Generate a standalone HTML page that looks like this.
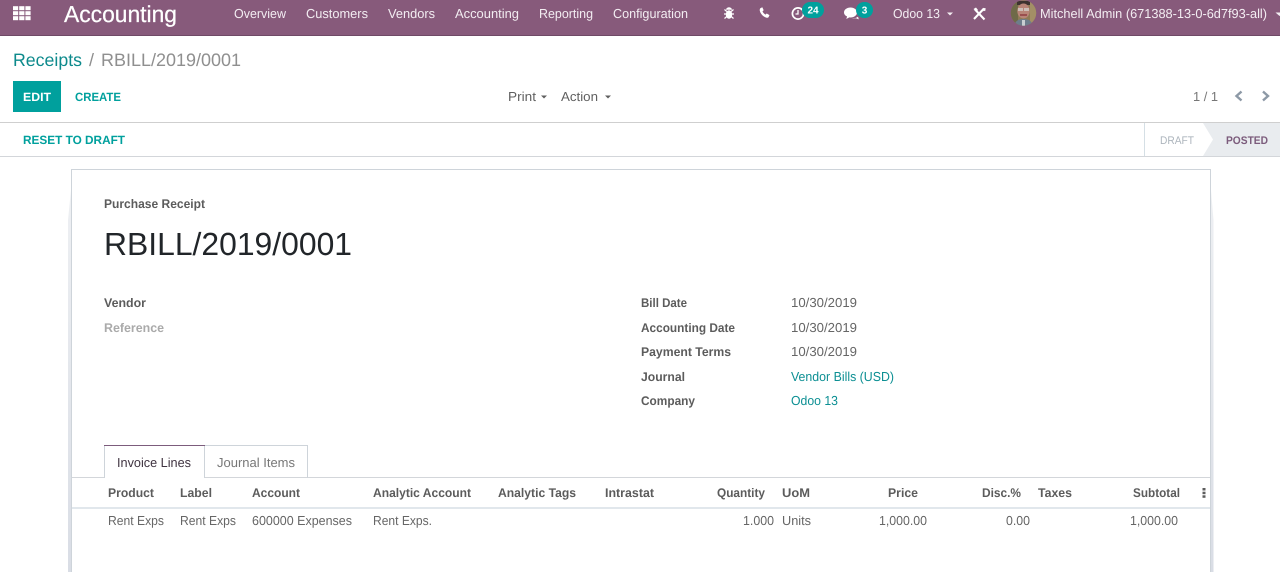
<!DOCTYPE html>
<html lang="en"><head><meta charset="utf-8"><title>Receipts</title>
<style>
html,body{margin:0;padding:0;background:#fff;width:1280px;height:572px;overflow:hidden}
svg{display:block}
text{font-family:"Liberation Sans",Arial,sans-serif;font-size:13px;fill:#666}
.n{fill:#f3edf2}
.b{font-weight:700;fill:#5c5c5c;font-size:12.5px}
.r{fill:#666}
.t{fill:#00a09d}
.u{font-weight:700;font-size:12px;fill:#00a09d}
.w{fill:#fff}
</style></head><body>
<svg width="1280" height="572" viewBox="0 0 1280 572" xmlns="http://www.w3.org/2000/svg" text-rendering="geometricPrecision">
<defs><linearGradient id="sl" x1="0" y1="0" x2="0" y2="1"><stop offset="0" stop-color="#eef0f3"/><stop offset="1" stop-color="#d9dde5"/></linearGradient>
<clipPath id="av"><circle cx="1023.5" cy="13" r="12.7"/></clipPath></defs>
<rect width="1280" height="572" fill="#fff"/>
<!-- navbar -->
<rect width="1280" height="36" fill="#875a7b"/><rect y="35" width="1280" height="1" fill="#6f4a66"/>
<g fill="#fff"><rect x="13" y="6.2" width="5.2" height="4"/><rect x="19.2" y="6.2" width="5.200" height="4"/><rect x="25.400" y="6.200" width="5.200" height="4"/><rect x="13" y="11.200" width="5.200" height="4"/><rect x="19.200" y="11.200" width="5.200" height="4"/><rect x="25.400" y="11.200" width="5.200" height="4"/><rect x="13" y="16.200" width="5.200" height="4"/><rect x="19.200" y="16.200" width="5.200" height="4"/><rect x="25.400" y="16.200" width="5.200" height="4"/></g>
<text class="w" x="64" y="22" textLength="113" lengthAdjust="spacingAndGlyphs" stroke="#fff" stroke-width=".25" style="font-size:23px">Accounting</text>
<text class="n" x="234" y="18" textLength="52" lengthAdjust="spacingAndGlyphs">Overview</text>
<text class="n" x="306" y="18" textLength="62" lengthAdjust="spacingAndGlyphs">Customers</text>
<text class="n" x="388" y="18" textLength="47" lengthAdjust="spacingAndGlyphs">Vendors</text>
<text class="n" x="455" y="18" textLength="64" lengthAdjust="spacingAndGlyphs">Accounting</text>
<text class="n" x="539" y="18" textLength="54" lengthAdjust="spacingAndGlyphs">Reporting</text>
<text class="n" x="613" y="18" textLength="75" lengthAdjust="spacingAndGlyphs">Configuration</text>
<!-- bug -->
<g fill="#fff" stroke="none"><ellipse cx="729" cy="14.5" rx="3.2" ry="4.3"/><path d="M726 9.8a3 2.6 0 0 1 6 0z"/></g>
<path d="M724.5 9.5l2.3 2M733.5 9.5l-2.3 2M724 14h2.5M734 14h-2.5M724.5 18.5l2.3-2M733.5 18.5l-2.3-2" stroke="#fff" stroke-width="1.2" fill="none"/>
<!-- phone -->
<path d="M760.3 8.2l2-.9 1.4 3-1.2 1c.5 1.4 1.5 2.5 3 3.3l1.2-1.1 2.8 1.6-1 2.1c-.5.6-1.4.7-2.3.4-3.2-1.1-5.6-3.6-6.4-6.8-.2-1.1 0-2 .5-2.6z" fill="#fff"/>
<!-- clock -->
<circle cx="798" cy="13.5" r="5.6" fill="none" stroke="#fff" stroke-width="1.7"/><path d="M798 10v4h-2.5" fill="none" stroke="#fff" stroke-width="1.3"/>
<rect x="802" y="2" width="22" height="16" rx="8" fill="#00a09d"/>
<text x="813" y="13.5" text-anchor="middle" style="font-size:10px;font-weight:700;fill:#fff">24</text>
<!-- comments -->
<path d="M844 12.500c0-2.800 2.800-5 6.500-5s6.500 2.200 6.500 5-2.800 5-6.500 5l-1.200-.1-3 1.600.8-2.500C845 15.500 844 14.200 844 12.500z" fill="#fff"/>
<path d="M852 18.200c2.500.2 4.500-.3 6-1.500l.8 2.700-2.800-1.100c-1.300.3-2.700.3-4-.1z" fill="#fff"/>
<rect x="856" y="2" width="17" height="16" rx="8" fill="#00a09d"/>
<text x="864.500" y="13.500" text-anchor="middle" style="font-size:10px;font-weight:700;fill:#fff">3</text>
<text class="n" x="893" y="18" textLength="47" lengthAdjust="spacingAndGlyphs">Odoo 13</text>
<path d="M947 12.500h6l-3 3z" fill="#f3edf2"/>
<!-- tools -->
<path d="M975 9.500l9.500 10M984 8.500l-10 10.500" stroke="#fff" stroke-width="2.100" fill="none"/><path d="M973.500 9l2.500-1.500 2 2.500-1.800 1.800zM985.500 8l-2.800.3 1 3 1.800-.8z" fill="#fff"/>
<!-- avatar -->
<g clip-path="url(#av)"><rect x="1010" y="0" width="27" height="27" fill="#8f7b55"/><rect x="1010" y="0" width="8" height="27" fill="#6f6a48"/><rect x="1030" y="0" width="7" height="27" fill="#a38f66"/><rect x="1017" y="1" width="13" height="4" fill="#3d3330"/><ellipse cx="1023.500" cy="11" rx="6.200" ry="7.500" fill="#b98578"/><rect x="1018" y="8" width="5" height="3" fill="#cdbfb8"/><rect x="1024" y="8" width="5" height="3" fill="#cdbfb8"/><rect x="1020" y="14" width="7" height="2" fill="#9a4f4f"/><path d="M1014 27c1-6 4-8 9.500-8s8.500 2 9.500 8z" fill="#6e7d8c"/><rect x="1022" y="20" width="3" height="6" fill="#c9ced2"/></g>
<text class="n" x="1040" y="18" textLength="227" lengthAdjust="spacingAndGlyphs">Mitchell Admin (671388-13-0-6d7f93-all)</text>
<path d="M1275.500 12.500h8l-4 3.500z" fill="#f3edf2"/>
<!-- breadcrumb -->
<text x="13" y="66" textLength="69" lengthAdjust="spacingAndGlyphs" style="font-size:18px;fill:#0d8a8c">Receipts</text>
<text x="89" y="66" style="font-size:18px;fill:#8f8f8f">/</text>
<text x="101" y="66" textLength="140" lengthAdjust="spacingAndGlyphs" style="font-size:18px;fill:#8f8f8f">RBILL/2019/0001</text>
<rect x="13" y="81" width="48" height="31" fill="#00a09d"/>
<text class="u" x="23" y="101" textLength="28" lengthAdjust="spacingAndGlyphs" style="fill:#fff">EDIT</text>
<text class="u" x="75" y="101" textLength="46" lengthAdjust="spacingAndGlyphs">CREATE</text>
<text x="508" y="101" textLength="28" lengthAdjust="spacingAndGlyphs" style="fill:#5f5f5f">Print</text><path d="M541 95.500h6l-3 3z" fill="#5f5f5f"/>
<text x="561" y="101" textLength="37" lengthAdjust="spacingAndGlyphs" style="fill:#5f5f5f">Action</text><path d="M605 95.500h6l-3 3z" fill="#5f5f5f"/>
<text x="1193" y="101" textLength="25" lengthAdjust="spacingAndGlyphs" style="fill:#777">1 / 1</text>
<path d="M1241.500 91.500l-5 4.500 5 4.500M1263 91.500l5 4.500-5 4.500" fill="none" stroke="#8d99a6" stroke-width="2.400"/>
<!-- statusbar -->
<rect y="122" width="1280" height="1" fill="#cfcfcf"/><rect y="156" width="1280" height="1" fill="#d3d6da"/>
<text class="u" x="23" y="144" textLength="102" lengthAdjust="spacingAndGlyphs">RESET TO DRAFT</text>
<rect x="1144" y="123" width="1" height="33" fill="#d5dfe5"/>
<path d="M1203 123H1280V156H1203L1213 139.500z" fill="#e9ecef"/>
<text x="1160" y="144" textLength="34" lengthAdjust="spacingAndGlyphs" style="font-size:11px;fill:#adb5bd">DRAFT</text>
<text x="1226" y="144" textLength="42" lengthAdjust="spacingAndGlyphs" style="font-size:11px;font-weight:700;fill:#7c5c7c">POSTED</text>
<!-- sheet -->
<path d="M71 190V572H68V220z" fill="url(#sl)"/><path d="M1211 190V572H1213.500V220z" fill="url(#sl)"/>
<path d="M71.500 572V169.500H1210.500V572" fill="none" stroke="#ced4da" stroke-width="1"/>
<text class="b" x="104" y="208" textLength="101" lengthAdjust="spacingAndGlyphs">Purchase Receipt</text>
<text x="104" y="255" textLength="248" lengthAdjust="spacingAndGlyphs" style="font-size:32px;fill:#212529">RBILL/2019/0001</text>
<text class="b" x="104" y="307" textLength="42" lengthAdjust="spacingAndGlyphs">Vendor</text>
<text class="b" x="104" y="332" textLength="60" lengthAdjust="spacingAndGlyphs" style="fill:#aaa">Reference</text>
<text class="b" x="641" y="307" textLength="46" lengthAdjust="spacingAndGlyphs">Bill Date</text>
<text class="b" x="641" y="332" textLength="94" lengthAdjust="spacingAndGlyphs">Accounting Date</text>
<text class="b" x="641" y="356" textLength="90" lengthAdjust="spacingAndGlyphs">Payment Terms</text>
<text class="b" x="641" y="381" textLength="44" lengthAdjust="spacingAndGlyphs">Journal</text>
<text class="b" x="641" y="405" textLength="54" lengthAdjust="spacingAndGlyphs">Company</text>
<text class="r" x="791" y="307" textLength="66" lengthAdjust="spacingAndGlyphs">10/30/2019</text>
<text class="r" x="791" y="332" textLength="66" lengthAdjust="spacingAndGlyphs">10/30/2019</text>
<text class="r" x="791" y="356" textLength="66" lengthAdjust="spacingAndGlyphs">10/30/2019</text>
<text class="t" x="791" y="381" textLength="103" lengthAdjust="spacingAndGlyphs" style="fill:#0c8f93">Vendor Bills (USD)</text>
<text class="t" x="791" y="405" textLength="47" lengthAdjust="spacingAndGlyphs" style="fill:#0c8f93">Odoo 13</text>
<!-- tabs -->
<rect x="72" y="477" width="1138" height="1" fill="#d3d6da"/>
<path d="M204.500 478V445.500H307.500V478" fill="none" stroke="#ced4da"/>
<rect x="105" y="446" width="99" height="33" fill="#fff"/>
<path d="M104.500 478V445.500H204.500V478" fill="none" stroke="#ced4da"/>
<rect x="104" y="445" width="101" height="1" fill="#7c5c7c"/>
<text x="117" y="467" textLength="74" lengthAdjust="spacingAndGlyphs" style="fill:#3f3340">Invoice Lines</text>
<text x="217" y="467" textLength="78" lengthAdjust="spacingAndGlyphs" style="fill:#777">Journal Items</text>
<!-- table -->
<rect x="72" y="507" width="1138" height="2" fill="#e1e7ec"/>
<text class="b" x="108" y="497" textLength="46" lengthAdjust="spacingAndGlyphs">Product</text>
<text class="b" x="180" y="497" textLength="32" lengthAdjust="spacingAndGlyphs">Label</text>
<text class="b" x="252" y="497" textLength="48" lengthAdjust="spacingAndGlyphs">Account</text>
<text class="b" x="373" y="497" textLength="98" lengthAdjust="spacingAndGlyphs">Analytic Account</text>
<text class="b" x="498" y="497" textLength="78" lengthAdjust="spacingAndGlyphs">Analytic Tags</text>
<text class="b" x="605" y="497" textLength="49" lengthAdjust="spacingAndGlyphs">Intrastat</text>
<text class="b" x="717" y="497" textLength="48" lengthAdjust="spacingAndGlyphs">Quantity</text>
<text class="b" x="782" y="497" textLength="28" lengthAdjust="spacingAndGlyphs">UoM</text>
<text class="b" x="888" y="497" textLength="30" lengthAdjust="spacingAndGlyphs">Price</text>
<text class="b" x="982" y="497" textLength="39" lengthAdjust="spacingAndGlyphs">Disc.%</text>
<text class="b" x="1038" y="497" textLength="34" lengthAdjust="spacingAndGlyphs">Taxes</text>
<text class="b" x="1133" y="497" textLength="47" lengthAdjust="spacingAndGlyphs">Subtotal</text>
<g fill="#5c5c5c"><rect x="1202.500" y="488" width="3" height="2.500"/><rect x="1202.500" y="491.700" width="3" height="2.500"/><rect x="1202.500" y="495.300" width="3" height="2.500"/></g>
<text class="r" x="108" y="525" textLength="56" lengthAdjust="spacingAndGlyphs">Rent Exps</text>
<text class="r" x="180" y="525" textLength="56" lengthAdjust="spacingAndGlyphs">Rent Exps</text>
<text class="r" x="252" y="525" textLength="100" lengthAdjust="spacingAndGlyphs">600000 Expenses</text>
<text class="r" x="373" y="525" textLength="59" lengthAdjust="spacingAndGlyphs">Rent Exps.</text>
<text class="r" x="743" y="525" textLength="31" lengthAdjust="spacingAndGlyphs">1.000</text>
<text class="r" x="782" y="525" textLength="29" lengthAdjust="spacingAndGlyphs">Units</text>
<text class="r" x="879" y="525" textLength="48" lengthAdjust="spacingAndGlyphs">1,000.00</text>
<text class="r" x="1006" y="525" textLength="24" lengthAdjust="spacingAndGlyphs">0.00</text>
<text class="r" x="1130" y="525" textLength="48" lengthAdjust="spacingAndGlyphs">1,000.00</text>
</svg>
</body></html>
